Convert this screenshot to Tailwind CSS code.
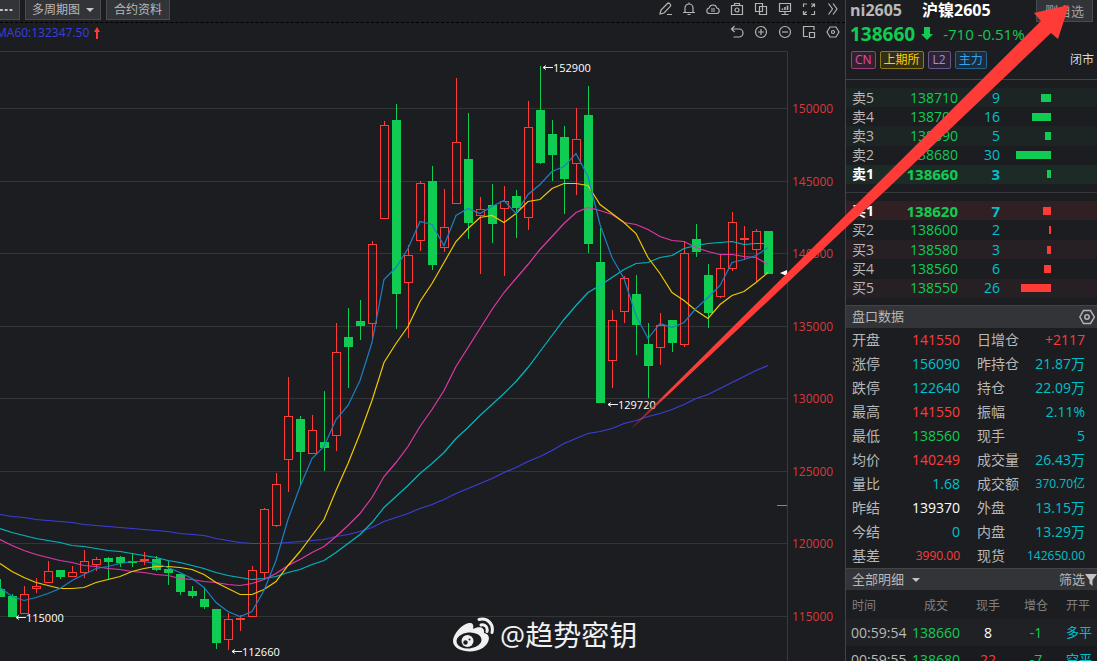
<!DOCTYPE html>
<html lang="zh-CN">

<head>
    <meta charset="UTF-8">
    <title>沪镍2605</title>
    <script src="https://cdn.jsdelivr.net/npm/@tailwindcss/browser@4"></script>
</head>

<body class="relative flex h-screen overflow-hidden bg-[#1c1d21] font-['Open_Sans','Noto_Sans_CJK_SC',sans-serif] text-[#b8b8b8]">

    <!-- Chart side -->
    <main class="relative flex min-w-0 flex-1 flex-col overflow-hidden">
        <div class="flex h-[23px] shrink-0 items-start justify-between border-b border-dashed border-black pr-1">
            <div class="flex gap-[5px] text-xs">
                <button aria-label="更多" class="flex h-5 w-5 items-center justify-center border border-t-0 border-l-0 border-[#4a4b4f] bg-[#333438]">
                    <svg class="h-3 w-5" viewBox="0 0 20 12" fill="#c4c4c4"><path d="M0 5h3v2H0zM5 5h3v2H5zM10 5h3v2h-3z" /></svg>
                </button>
                <button class="flex h-5 items-center gap-1.5 border border-t-0 border-[#4a4b4f] bg-[#333438] px-1.5">多周期图
                    <svg class="h-2 w-2" viewBox="0 0 8 8" fill="#c4c4c4"><path d="M0 2h8L4 6z" /></svg>
                </button>
                <button class="flex h-5 items-center border border-t-0 border-[#4a4b4f] bg-[#333438] px-[7px]">合约资料</button>
            </div>
            <div class="flex gap-2 pt-px">
                <button aria-label="画线"><svg class="h-4 w-4" viewBox="0 0 16 16" fill="none" stroke="#b4b4b4" stroke-width="1.2"><path d="M3 13l1-4 6.500-6.500q1-1 2 0l.8.8q1 1 0 2L7 12zM3 13l4-1M10 13.500h5" /></svg></button>
                <button aria-label="预警"><svg class="h-4 w-4" viewBox="0 0 16 16" fill="none" stroke="#b4b4b4" stroke-width="1.2"><path d="M4 11.500V7a4 4 0 0 1 8 0v4.500M2 11.500h12M6.500 13.500h3M8 1.500V3" /></svg></button>
                <button aria-label="云端"><svg class="h-4 w-4" viewBox="0 0 16 16" fill="none" stroke="#b4b4b4" stroke-width="1.1"><path d="M4 12.500a2.800 2.800 0 0 1 .2-5.500a3.900 3.900 0 0 1 7.600 0a2.800 2.800 0 0 1 .2 5.500zM6 8h4M6 10h4" /></svg></button>
                <button aria-label="截图"><svg class="h-4 w-4" viewBox="0 0 16 16" fill="none" stroke="#b4b4b4" stroke-width="1.2"><path d="M2.500 4.500h11v9h-11zM5.500 4.500v-2h5v2" /><circle cx="8" cy="9" r="2" /></svg></button>
                <button aria-label="叠加"><svg class="h-4 w-4" viewBox="0 0 16 16" fill="none" stroke="#b4b4b4" stroke-width="1.2"><path d="M2.500 2.500h7v8h-7zM6.500 5.500h7v8h-7z" /></svg></button>
                <button aria-label="看板"><svg class="h-4 w-4" viewBox="0 0 16 16" fill="none" stroke="#b4b4b4" stroke-width="1.2"><path d="M2.500 2.500h11v8h-11zM8 10.500v3M4.500 13.500h7" /><path d="M5.500 9V7.500M8 9V6M10.500 9V4.500" stroke-width="1.600" /></svg></button>
                <button aria-label="全屏"><svg class="h-4 w-4" viewBox="0 0 16 16" fill="none" stroke="#b4b4b4" stroke-width="1.2"><path d="M2.500 6V3H6M10 3h3.500v3M13.500 10v3.500H10M6 13.500H2.500V10M10.500 6l2.500-2.500M5.500 10.500L3 13" /></svg></button>
                <button aria-label="展开"><svg class="h-4 w-4" viewBox="0 0 16 16" fill="none" stroke="#b4b4b4" stroke-width="1.2"><path d="M3.500 2.500l4 5.500l-4 5.500M8 2.500l4 5.500l-4 5.500" /></svg></button>
            </div>
        </div>
        <div class="flex h-7 shrink-0 items-start justify-between pr-1">
            <div class="-ml-1 flex items-center gap-1 pt-0.5 text-xs text-[#3440e0]">MA60:132347.50
                <svg class="h-3 w-2" viewBox="0 0 8 12" fill="#ff3b38"><path d="M4 0l3 5H5v7H3V5H1z" /></svg>
            </div>
            <div class="flex gap-2 pt-px">
                <button aria-label="撤销"><svg class="h-4 w-4" viewBox="0 0 16 16" fill="none" stroke="#b4b4b4" stroke-width="1.2"><path d="M5.500 2L2.500 5l3 3M2.500 5H10a3.800 3.800 0 0 1 0 8H4.500" /></svg></button>
                <button aria-label="放大"><svg class="h-4 w-4" viewBox="0 0 16 16" fill="none" stroke="#b4b4b4" stroke-width="1.2"><circle cx="8" cy="8" r="5.500" /><path d="M5 8h6M8 5v6" /></svg></button>
                <button aria-label="缩小"><svg class="h-4 w-4" viewBox="0 0 16 16" fill="none" stroke="#b4b4b4" stroke-width="1.2"><circle cx="8" cy="8" r="5.500" /><path d="M5 8h6" /></svg></button>
                <button aria-label="窗口"><svg class="h-4 w-4" viewBox="0 0 16 16" fill="none" stroke="#b4b4b4" stroke-width="1.2"><path d="M7 12.500H2.500v-10h10.500V6M8.500 8.500h5v5h-5z" /></svg></button>
                <button aria-label="设置"><svg class="h-4 w-4" viewBox="0 0 16 16" fill="none" stroke="#b4b4b4" stroke-width="1.2"><path d="M5 3h6l3 5l-3 5H5L2 8z" /><circle cx="8" cy="8" r="1.500" /></svg></button>
            </div>
        </div>
        <svg id="chart" class="block w-full shrink-0" viewBox="0 51 845 610"></svg>

        <div class="absolute bottom-[5px] left-[53.5%] flex items-center gap-1 text-[28px] leading-[42px] text-[#f0f0f0]">
            <svg class="h-9 w-11" viewBox="0 0 44 36">
                <path d="M1 24C1 17 10 7 17 6c4-.5 5 2 4 6c6-3 12-2 11 4c5 1 6 5 4 9c-3 6-10 9.500-18 9.500S1 31 1 24z" fill="#f0f0f0" />
                <ellipse cx="17" cy="23.500" rx="12.500" ry="8" fill="#1c1d21" transform="rotate(-6 17 23.500)" />
                <circle cx="15.500" cy="24" r="6" fill="#f0f0f0" />
                <circle cx="13.500" cy="25.500" r="2.200" fill="#1c1d21" />
                <circle cx="17.500" cy="22.500" r="1" fill="#1c1d21" />
                <path d="M27 2.500c8-2 15 4 13 13M29 8c4-.8 7 2 6 6.500" fill="none" stroke="#f0f0f0" stroke-width="3" stroke-linecap="round" />
            </svg>
            <span>@趋势密钥</span>
        </div>
    </main>

    <!-- Quote side -->
    <aside class="flex w-[252px] shrink-0 flex-col overflow-hidden border-l border-[#434448]">
        <div class="flex h-[22px] shrink-0 items-center pr-1 pl-1 text-base leading-5 font-bold">
            <h1 class="flex flex-1 gap-5 pb-0.5"><span>ni2605</span><span class="text-white">沪镍2605</span></h1>
            <button class="h-[22px] w-[57px] border border-t-0 border-[#4a4b4f] bg-[#333438] text-[13px] font-normal text-[#a0a0a0]">删自选</button>
        </div>
        <div class="flex h-6 shrink-0 items-center pl-1 text-[15px] text-[#10cc52]">
            <span class="text-[19px] font-bold">138660</span>
            <svg class="mx-1.5 h-3.5 w-3" viewBox="0 0 12 14" fill="#10cc52"><path d="M3 0h6v7h3l-6 6L0 7h3z" /></svg>
            <span class="ml-1">-710 -0.51%</span>
        </div>
        <div class="flex shrink-0 items-center justify-between border-b border-[#434448] pt-[5px] pr-[3px] pb-2.5 pl-[5px] text-xs leading-4">
            <div class="flex gap-1">
                <span class="rounded-xs border border-[#9a3f80] bg-[#33202f] px-[3px] text-[#e84bb4]">CN</span>
                <span class="rounded-xs border border-[#8d7a12] bg-[#332e1a] px-[3px] text-[#ffd000]">上期所</span>
                <span class="rounded-xs border border-[#6c548f] bg-[#2a2535] px-1 text-[#b183ee]">L2</span>
                <span class="rounded-xs border border-[#24648f] bg-[#1c2c3a] px-[3px] text-[#36a3ee]">主力</span>
            </div>
            <span class="text-[#d8d8d8]">闭市</span>
        </div>

        <div id="asks" class="mt-2 flex h-24 shrink-0 flex-col text-sm leading-4"></div>
        <div class="my-2 h-px shrink-0 bg-[#38393d]"></div>
        <div id="bids" class="flex h-[97px] shrink-0 flex-col text-sm leading-4"></div>

        <div class="mt-[7px] flex h-[23px] shrink-0 items-center justify-between border-t border-[#434448] bg-[#333438] pr-0.5 pl-1.5">
            <h2 class="text-[13px]">盘口数据</h2>
            <button aria-label="盘口设置"><svg class="h-4 w-4" viewBox="0 0 16 16" fill="none" stroke="#b4b4b4" stroke-width="1.500"><path d="M4.500 1.500h7l4 6.500l-4 6.500h-7L.8 8z" /><circle cx="8" cy="8" r="2.200" /></svg></button>
        </div>
        <table class="w-full table-fixed text-sm">
            <colgroup>
                <col class="w-[50px]">
                <col class="w-16">
                <col class="w-[66px]">
                <col>
            </colgroup>
            <tbody id="quote"></tbody>
        </table>

        <div class="flex h-[22px] shrink-0 items-center justify-between border-t border-[#434448] bg-[#333438] pl-1.5 text-[13px]">
            <button class="flex items-center gap-2">全部明细
                <svg class="h-2 w-2" viewBox="0 0 8 8" fill="#c4c4c4"><path d="M0 2h8L4 6z" /></svg>
            </button>
            <button class="flex items-center">筛选
                <svg class="h-3 w-3" viewBox="0 0 12 12" fill="#c4c4c4"><path d="M0 0h12L7.500 6v6L4.500 9.500V6z" /></svg>
            </button>
        </div>
        <table class="w-full table-fixed text-sm">
            <colgroup>
                <col class="w-[60px]">
                <col class="w-[60px]">
                <col class="w-11">
                <col class="w-[52px]">
                <col>
            </colgroup>
            <thead>
                <tr class="h-[29px] text-xs text-[#808080]">
                    <th class="pt-0.5 pl-1.5 text-left font-normal">时间</th>
                    <th class="pt-0.5 font-normal">成交</th>
                    <th class="pt-0.5 font-normal">现手</th>
                    <th class="pt-0.5 font-normal">增仓</th>
                    <th class="pt-0.5 pl-1 text-left font-normal">开平</th>
                </tr>
            </thead>
            <tbody id="trades"></tbody>
        </table>
    </aside>

    <!-- Trend arrow -->
    <svg class="pointer-events-none absolute top-0 right-0 h-[440px] w-[477px]" viewBox="620 0 477 440">
        <defs>
            <linearGradient id="fade" gradientUnits="userSpaceOnUse" x1="633" y1="427" x2="665" y2="395">
                <stop offset="0" stop-color="#ff3b38" stop-opacity="0.2" />
                <stop offset="1" stop-color="#ff3b38" />
            </linearGradient>
        </defs>
        <path d="M632 427L871 190L1041 21L1034 13L1069 5L1058 39L1051 33L886 190L633 428z" fill="url(#fade)" />
    </svg>

    <script>
        const RED = "#ff3b38";
        const GREEN = "#10cc52";
        const STEP = 12;

        // [up, high, body top, body bottom, low]
        const candles = [
            [0, 579, 589, 597, 597], [0, 594, 596, 617, 617], [1, 586, 594, 614, 614], [1, 578, 586, 589, 593],
            [1, 561, 571, 583, 583], [0, 570, 570, 577, 579], [1, 566, 572, 577, 577], [1, 550, 561, 573, 578],
            [1, 557, 559, 565, 571], [0, 557, 558, 562, 579], [0, 556, 557, 563, 567], [0, 553, 561, 563, 567],
            [1, 552, 559, 561, 565], [0, 556, 559, 570, 571], [0, 561, 569, 573, 585], [0, 574, 574, 592, 595],
            [0, 586, 591, 596, 598], [0, 587, 599, 607, 609], [0, 609, 609, 643, 649], [1, 613, 619, 640, 650],
            [1, 615, 618, 620, 631], [1, 566, 570, 617, 617], [1, 508, 509, 573, 580], [1, 473, 484, 526, 527],
            [1, 377, 416, 460, 492], [0, 416, 419, 452, 485], [1, 415, 430, 454, 454], [0, 391, 442, 448, 471],
            [1, 323, 352, 436, 451], [0, 308, 337, 347, 388], [0, 300, 321, 326, 340], [1, 241, 244, 324, 339],
            [1, 121, 125, 219, 219], [0, 104, 120, 294, 329], [1, 245, 255, 283, 338], [1, 181, 183, 241, 251],
            [0, 166, 181, 265, 270], [1, 189, 227, 248, 252], [1, 78, 142, 204, 204], [0, 113, 159, 223, 239],
            [1, 197, 209, 216, 274], [0, 184, 205, 224, 243], [1, 186, 201, 209, 276], [0, 190, 196, 208, 238],
            [1, 101, 127, 218, 230], [0, 66, 110, 163, 164], [0, 120, 134, 155, 181], [0, 126, 137, 179, 214],
            [1, 108, 139, 164, 195], [0, 86, 115, 244, 253], [0, 228, 262, 403, 403], [1, 310, 320, 361, 388],
            [1, 276, 278, 312, 323], [0, 275, 294, 325, 355], [0, 323, 344, 366, 398], [1, 313, 325, 348, 365],
            [0, 320, 320, 343, 352], [1, 242, 253, 345, 347], [0, 224, 239, 252, 257], [0, 264, 275, 313, 328],
            [1, 255, 268, 297, 298], [1, 212, 222, 269, 271], [1, 226, 238, 240, 260], [1, 229, 231, 250, 281],
            [0, 231, 231, 274, 274]
        ];

        const averages = [
            { color: "#3a40d8", y: [514, 516, 517, 519, 520, 521, 522, 524, 525, 526, 527, 528, 529, 530, 531, 533, 534, 535, 538, 540, 542, 543, 543, 543, 542, 541, 540, 539, 536, 534, 531, 527, 521, 517, 513, 508, 504, 499, 493, 488, 483, 478, 472, 467, 461, 456, 450, 443, 438, 433, 431, 428, 423, 420, 416, 413, 409, 404, 398, 394, 388, 382, 376, 370, 365] },
            { color: "#00b8bf", y: [528, 532, 535, 538, 540, 542, 545, 546, 548, 550, 551, 553, 555, 557, 560, 562, 565, 568, 572, 575, 577, 579, 578, 576, 572, 569, 564, 560, 552, 543, 534, 522, 507, 496, 485, 473, 463, 452, 438, 427, 415, 404, 393, 381, 367, 351, 335, 319, 305, 292, 285, 277, 269, 263, 262, 257, 255, 248, 245, 243, 242, 241, 244, 243, 243] },
            { color: "#e038a8", y: [539, 545, 550, 554, 557, 560, 562, 565, 566, 568, 569, 571, 572, 574, 575, 578, 579, 581, 582, 584, 585, 583, 579, 573, 565, 559, 552, 546, 536, 525, 513, 497, 476, 462, 446, 426, 409, 390, 366, 347, 328, 309, 292, 278, 264, 249, 236, 223, 212, 207, 210, 214, 222, 224, 229, 236, 240, 241, 247, 251, 254, 254, 256, 257, 264] },
            { color: "#f0c800", y: [563, 571, 577, 582, 585, 588, 588, 587, 582, 579, 576, 571, 568, 566, 566, 567, 569, 574, 582, 588, 594, 594, 589, 581, 565, 551, 535, 519, 490, 463, 433, 400, 362, 343, 326, 301, 283, 262, 241, 228, 217, 215, 222, 213, 201, 199, 188, 183, 183, 185, 204, 213, 222, 233, 257, 273, 292, 300, 310, 318, 304, 295, 291, 282, 272] },
            { color: "#1c80c4", y: [587, 596, 600, 597, 593, 588, 580, 574, 568, 566, 563, 561, 561, 563, 567, 572, 578, 587, 602, 611, 616, 611, 590, 560, 519, 486, 458, 446, 419, 405, 380, 342, 279, 267, 248, 221, 224, 245, 215, 208, 213, 206, 200, 213, 194, 184, 171, 166, 153, 176, 224, 257, 278, 315, 338, 323, 327, 322, 308, 297, 285, 262, 259, 255, 247] }
        ];

        const grid = [[150000, 108], [145000, 181], [140000, 253], [135000, 326], [130000, 398], [125000, 471], [120000, 543], [115000, 616]];
        const marks = [[152900, 542, 68], [129720, 607, 405], [115000, 15, 618], [112660, 231, 652]];

        function drawChart() {
            let s = `<path d="M0 51.5H787.5V661" fill="none" stroke="#38393d" />`;
            grid.forEach(([price, y]) => {
                s += `<path d="M0 ${y + 0.5}H787" stroke="#333438" />`;
                s += `<text x="792" y="${y + 5}" class="text-xs" fill="#d83a3a">${price}</text>`;
            });
            candles.forEach(([up, high, top, bottom, low], i) => {
                const x = i * STEP;
                const color = up ? RED : GREEN;
                s += `<path d="M${x + 0.5} ${high}V${top}M${x + 0.5} ${bottom}V${low}" stroke="${color}" />`;
                if (up && bottom - top > 2) {
                    s += `<rect x="${x - 3.5}" y="${top + 0.5}" width="8" height="${bottom - top - 1}" fill="none" stroke="${color}" />`;
                } else {
                    s += `<rect x="${x - 4}" y="${top}" width="9" height="${bottom - top}" fill="${color}" />`;
                }
            });
            averages.forEach(({ color, y }) => {
                const points = y.map((v, i) => `${i * STEP},${v + 0.5}`).join(" ");
                s += `<polyline points="${points}" fill="none" stroke="${color}" stroke-width="1.2" />`;
            });
            marks.forEach(([price, x, y]) => {
                s += `<path d="M${x + 11} ${y - 0.5}H${x + 1}M${x + 4} ${y - 2.5}L${x + 1} ${y - 0.5}L${x + 4} ${y + 1.5}" fill="none" stroke="#f0f0f0" />`;
                s += `<text x="${x + 11}" y="${y + 4}" class="text-[11px]" fill="#fff">${price}</text>`;
            });
            s += `<path d="M777 505.5H787" stroke="${GREEN}" />`;
            s += `<path d="M780 273L787 270V276z" fill="#fff" />`;
            document.getElementById("chart").innerHTML = s;
        }

        // [label, price, volume, bar width]
        const asks = [["卖5", 138710, 9, 10], ["卖4", 138700, 16, 19], ["卖3", 138690, 5, 6], ["卖2", 138680, 30, 35], ["卖1", 138660, 3, 4]];
        const bids = [["买1", 138620, 7, 8], ["买2", 138600, 2, 2], ["买3", 138580, 3, 4], ["买4", 138560, 6, 7], ["买5", 138550, 26, 30]];

        function drawBook(id, rows, best, bestBg, stripeBg, bar) {
            document.getElementById(id).innerHTML = rows.map(([label, price, volume, width], i) => {
                const bg = i === best ? bestBg : i % 2 === 0 ? stripeBg : "";
                const weight = i === best ? "font-bold text-[15px]" : "";
                return `
        <div class="flex min-h-0 flex-1 items-center pl-1.5 ${bg} ${weight}">
          <span class="w-9 text-sm leading-4 ${i === best ? "text-white" : ""}">${label}</span>
          <span class="w-[70px] text-right text-[#10cc52]">${price}</span>
          <span class="w-[42px] text-right text-[#00c0cc]">${volume}</span>
          <span class="flex w-[51px] justify-end"><i class="block h-2 ${bar}" style="width:${width}px"></i></span>
        </div>`;
            }).join("");
        }

        const R = "text-[#ff3b38]", G = "text-[#10cc52]", C = "text-[#00c0cc]", W = "text-white";
        const quote = [
            ["开盘", "141550", R, "日增仓", "+2117", R],
            ["涨停", "156090", C, "昨持仓", "21.87万", C],
            ["跌停", "122640", C, "持仓", "22.09万", C],
            ["最高", "141550", R, "振幅", "2.11%", C],
            ["最低", "138560", G, "现手", "5", C],
            ["均价", "140249", R, "成交量", "26.43万", C],
            ["量比", "1.68", C, "成交额", "370.70亿", C],
            ["昨结", "139370", W, "外盘", "13.15万", C],
            ["今结", "0", C, "内盘", "13.29万", C],
            ["基差", "3990.00", R, "现货", "142650.00", C]
        ];
        const trades = [
            ["00:59:54", "138660", "8", W, "-1", "多平"],
            ["00:59:55", "138680", "22", R, "-7", "空平"]
        ];

        // long figures drop to the smaller size
        const size = (text) => !text.endsWith("万") && text.length > 6 ? "text-xs" : "";

        drawChart();
        drawBook("asks", asks, 4, "bg-[#1d2b27]", "bg-[#1d2424]", "bg-[#10cc52]");
        drawBook("bids", bids, 0, "bg-[#302024]", "bg-[#261f23]", "bg-[#ff3b38]");
        document.getElementById("quote").innerHTML = quote.map(([a, av, ac, b, bv, bc]) => `
        <tr class="h-6">
          <th class="pl-1.5 text-left font-normal">${a}</th>
          <td class="text-right ${ac} ${size(av)}">${av}</td>
          <th class="pl-[17px] text-left font-normal whitespace-nowrap">${b}</th>
          <td class="pr-3 text-right whitespace-nowrap ${bc} ${size(bv)}"><span class="float-right">${bv}</span></td>
        </tr>`).join("");
        document.getElementById("trades").innerHTML = trades.map(([time, price, volume, color, change, kind], i) => `
        <tr class="h-[27px] text-center ${i % 2 === 0 ? "bg-[#202125]" : "bg-[#1a1b1f]"}">
          <td class="pl-[5px] text-left">${time}</td>
          <td class="${G}">${price}</td>
          <td class="${color}">${volume}</td>
          <td class="${G}">${change}</td>
          <td class="pl-1 text-left text-[13px] ${C}">${kind}</td>
        </tr>`).join("");
    </script>
</body>

</html>
